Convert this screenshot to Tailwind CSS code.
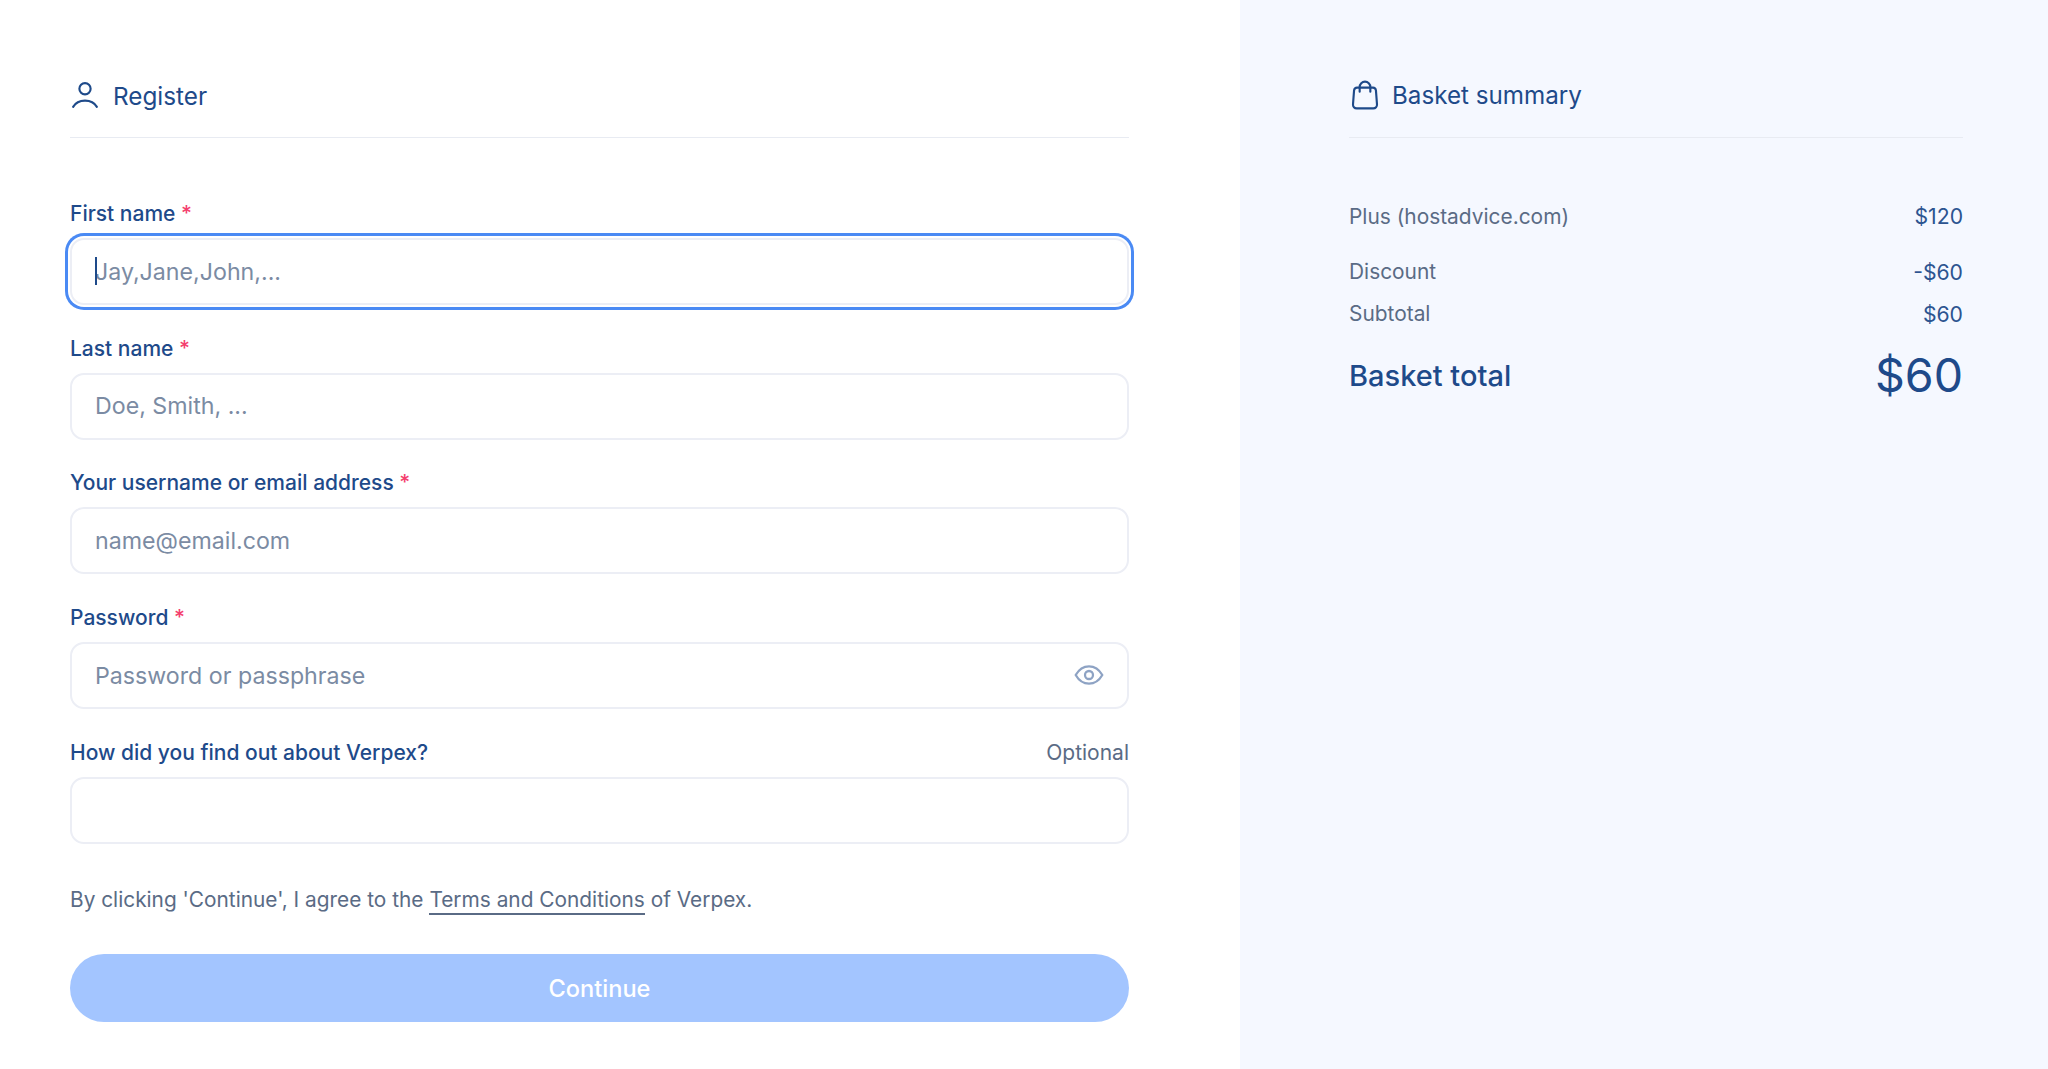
<!DOCTYPE html>
<html lang="en">

<head>
    <meta charset="UTF-8">
    <title>Register</title>
    <script src="https://cdn.jsdelivr.net/npm/@tailwindcss/browser@4"></script>
</head>

<body class="bg-white font-['Inter',sans-serif]">
    <div class="flex h-[1069px] overflow-hidden">
        <!-- register form -->
        <div class="w-[1240px] pl-[70px] pr-[111px] pt-[73px]">
            <div class="flex items-center gap-[13px] h-[65px] pb-[20px] border-b border-[#e8ebf2] text-[24.3px] leading-[32px] text-[#1e4a8a]">
                <svg class="w-[30px] h-[30px]" viewBox="0 0 24 24" fill="none" stroke="#1e4a8a" stroke-width="1.7" stroke-linecap="round">
                    <circle cx="12" cy="7" r="4.500" />
                    <path d="M2.500 21.500C4.500 18 8 16.500 12 16.500s7.500 1.500 9.500 5" />
                </svg>
                <span class="pt-[1px]">Register</span>
            </div>

            <div class="flex flex-col gap-[27.7px] mt-[60px]">
                <div>
                    <label class="block h-[30px] mb-[10px] text-[21px] leading-[32px] font-medium text-[#1e4a8a]">First name <span class="text-[#f43f6e]">*</span></label>
                    <div class="relative">
                        <input type="text" placeholder="Jay,Jane,John,..." class="w-full h-[67px] px-[23px] bg-white border-2 border-[#eceef5] rounded-[14px] text-[23.2px] placeholder:text-[#7b8ba3] outline-none ring-3 ring-[#4a8af4] ring-offset-2">
                        <span class="absolute left-[25px] top-[19px] w-[2px] h-[28px] bg-[#1e4a8a]"></span>
                    </div>
                </div>
                <div>
                    <label class="block h-[30px] mb-[10px] text-[21px] leading-[32px] font-medium text-[#1e4a8a]">Last name <span class="text-[#f43f6e]">*</span></label>
                    <input type="text" placeholder="Doe, Smith, ..." class="w-full h-[67px] px-[23px] bg-white border-2 border-[#eceef5] rounded-[14px] text-[23.2px] placeholder:text-[#7b8ba3] outline-none">
                </div>
                <div>
                    <label class="block h-[30px] mb-[10px] text-[21px] leading-[32px] font-medium text-[#1e4a8a]">Your username or email address <span class="text-[#f43f6e]">*</span></label>
                    <input type="text" placeholder="name@email.com" class="w-full h-[67px] px-[23px] bg-white border-2 border-[#eceef5] rounded-[14px] text-[23.2px] placeholder:text-[#7b8ba3] outline-none">
                </div>
                <div>
                    <label class="block h-[30px] mb-[10px] text-[21px] leading-[32px] font-medium text-[#1e4a8a]">Password <span class="text-[#f43f6e]">*</span></label>
                    <div class="relative">
                        <input type="password" placeholder="Password or passphrase" class="w-full h-[67px] px-[23px] bg-white border-2 border-[#eceef5] rounded-[14px] text-[23.2px] placeholder:text-[#7b8ba3] outline-none">
                        <svg class="absolute right-[24px] top-[17px] w-[32px] h-[32px]" viewBox="0 0 24 24" fill="none" stroke="#8ea3c4" stroke-width="1.7" stroke-linejoin="round">
                            <path d="M2 12c2.500-4.300 6-6.500 10-6.500s7.500 2.200 10 6.500c-2.500 4.300-6 6.500-10 6.500S4.500 16.300 2 12z" />
                            <circle cx="12" cy="12" r="3" />
                        </svg>
                    </div>
                </div>
                <div>
                    <div class="flex justify-between h-[30px] mb-[10px] text-[21px] leading-[32px]">
                        <label class="font-medium text-[#1e4a8a]">How did you find out about Verpex?</label>
                        <span class="text-[#5a6b85]">Optional</span>
                    </div>
                    <input type="text" class="w-full h-[67px] px-[23px] bg-white border-2 border-[#eceef5] rounded-[14px] text-[23.2px] outline-none">
                </div>
            </div>

            <p class="mt-[41px] h-[30px] text-[20.85px] leading-[30px] text-[#5a6b85]">By clicking 'Continue', I agree to the <a href="#" class="border-b-2 border-[#5a6b85] pb-[1px]">Terms and Conditions</a> of Verpex.</p>

            <button type="button" class="w-full h-[68px] mt-[39px] pt-[2px] rounded-full bg-[#a3c5ff] text-white text-[23.6px] font-medium">Continue</button>
        </div>

        <!-- basket -->
        <div class="flex-1 bg-[#f5f8ff] pl-[109px] pr-[85px] pt-[73px]">
            <div class="flex items-center gap-[11px] h-[65px] pb-[20px] border-b border-[#e8ebf2] text-[24.2px] leading-[32px] text-[#1e4a8a]">
                <svg class="w-[32px] h-[32px]" viewBox="0 0 24 24" fill="none" stroke="#1e4a8a" stroke-width="1.600" stroke-linecap="round" stroke-linejoin="round">
                    <path d="M6 6.500h12c1.200 0 2 .8 2.200 2l.8 10.500c.1 1.700-1 3-2.800 3H5.800c-1.800 0-2.900-1.300-2.800-3l.8-10.500c.2-1.200 1-2 2.200-2z" />
                    <path d="M8 9.500V6a4 4 0 0 1 8 0v3.500" />
                </svg>
                <span class="pt-[1px]">Basket summary</span>
            </div>

            <div class="flex justify-between mt-[63px] h-[30px] text-[20.9px] leading-[31px]">
                <span class="text-[#5a6b85]">Plus (hostadvice.com)</span>
                <span class="text-[21.2px] text-[#2c5490]">$120</span>
            </div>
            <div class="flex justify-between mt-[26px] h-[30px] text-[20.9px] leading-[30px]">
                <span class="text-[#5a6b85]">Discount</span>
                <span class="text-[21.2px] text-[#2c5490]">-$60</span>
            </div>
            <div class="flex justify-between mt-[12px] h-[30px] text-[20.9px] leading-[30px]">
                <span class="text-[#5a6b85]">Subtotal</span>
                <span class="text-[21.2px] text-[#2c5490]">$60</span>
            </div>
            <div class="flex justify-between items-center mt-[17px] h-[60px] text-[#1e4a8a]">
                <span class="text-[29px] font-medium">Basket total</span>
                <span class="text-[46.5px]">$60</span>
            </div>
        </div>
    </div>
</body>

</html>
